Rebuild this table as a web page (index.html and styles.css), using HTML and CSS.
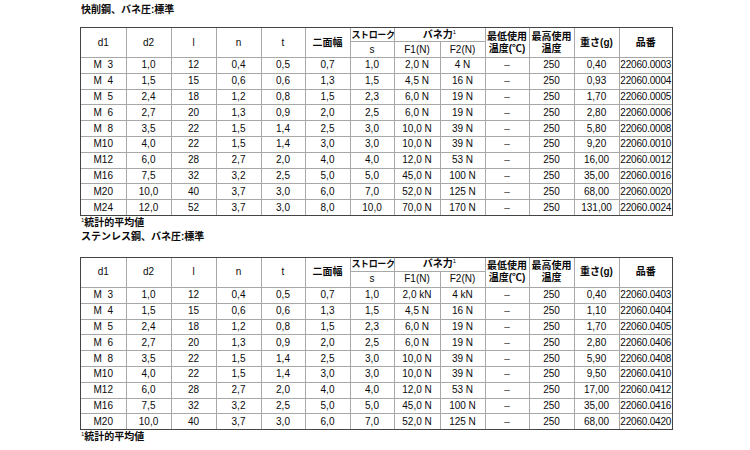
FILE: index.html
```html
<!DOCTYPE html>
<html lang="ja">
<head>
<meta charset="utf-8">
<link rel="stylesheet" href="styles.css">
</head>
<body>
<div class="page">
  <div class="title first">快削鋼、バネ圧:標準</div>
  <div class="frame">
    <table class="spec">
      <colgroup>
        <col class="c45"><col class="c45"><col class="c45"><col class="c45"><col class="c44"><col class="c45"><col class="c44"><col class="c46"><col class="c45"><col class="c44"><col class="c45"><col class="c45"><col class="c53">
      </colgroup>
      <thead>
        <tr class="h1">
          <th rowspan="2">d1</th><th rowspan="2">d2</th><th rowspan="2">l</th><th rowspan="2">n</th><th rowspan="2">t</th>
          <th rowspan="2" class="jp">二面幅</th>
          <th class="jp stroke">ストローク</th>
          <th colspan="2" class="jp">バネ力<sup>1</sup></th>
          <th rowspan="2" class="jp two">最低使用<br>温度(℃)</th>
          <th rowspan="2" class="jp two">最高使用<br>温度</th>
          <th rowspan="2" class="jp">重さ(g)</th>
          <th rowspan="2" class="jp">品番</th>
        </tr>
        <tr class="h2">
          <th>s</th><th>F1(N)</th><th>F2(N)</th>
        </tr>
      </thead>
      <tbody>
        <tr><td>M&#8199;3</td><td>1,0</td><td>12</td><td>0,4</td><td>0,5</td><td>0,7</td><td>1,0</td><td>2,0 N</td><td>4 N</td><td class="dash">–</td><td>250</td><td>0,40</td><td class="pn">22060.0003</td></tr>
        <tr><td>M&#8199;4</td><td>1,5</td><td>15</td><td>0,6</td><td>0,6</td><td>1,3</td><td>1,5</td><td>4,5 N</td><td>16 N</td><td class="dash">–</td><td>250</td><td>0,93</td><td class="pn">22060.0004</td></tr>
        <tr><td>M&#8199;5</td><td>2,4</td><td>18</td><td>1,2</td><td>0,8</td><td>1,5</td><td>2,3</td><td>6,0 N</td><td>19 N</td><td class="dash">–</td><td>250</td><td>1,70</td><td class="pn">22060.0005</td></tr>
        <tr><td>M&#8199;6</td><td>2,7</td><td>20</td><td>1,3</td><td>0,9</td><td>2,0</td><td>2,5</td><td>6,0 N</td><td>19 N</td><td class="dash">–</td><td>250</td><td>2,80</td><td class="pn">22060.0006</td></tr>
        <tr><td>M&#8199;8</td><td>3,5</td><td>22</td><td>1,5</td><td>1,4</td><td>2,5</td><td>3,0</td><td>10,0 N</td><td>39 N</td><td class="dash">–</td><td>250</td><td>5,80</td><td class="pn">22060.0008</td></tr>
        <tr><td>M10</td><td>4,0</td><td>22</td><td>1,5</td><td>1,4</td><td>3,0</td><td>3,0</td><td>10,0 N</td><td>39 N</td><td class="dash">–</td><td>250</td><td>9,20</td><td class="pn">22060.0010</td></tr>
        <tr><td>M12</td><td>6,0</td><td>28</td><td>2,7</td><td>2,0</td><td>4,0</td><td>4,0</td><td>12,0 N</td><td>53 N</td><td class="dash">–</td><td>250</td><td>16,00</td><td class="pn">22060.0012</td></tr>
        <tr><td>M16</td><td>7,5</td><td>32</td><td>3,2</td><td>2,5</td><td>5,0</td><td>5,0</td><td>45,0 N</td><td>100 N</td><td class="dash">–</td><td>250</td><td>35,00</td><td class="pn">22060.0016</td></tr>
        <tr><td>M20</td><td>10,0</td><td>40</td><td>3,7</td><td>3,0</td><td>6,0</td><td>7,0</td><td>52,0 N</td><td>125 N</td><td class="dash">–</td><td>250</td><td>68,00</td><td class="pn">22060.0020</td></tr>
        <tr><td>M24</td><td>12,0</td><td>52</td><td>3,7</td><td>3,0</td><td>8,0</td><td>10,0</td><td>70,0 N</td><td>170 N</td><td class="dash">–</td><td>250</td><td>131,00</td><td class="pn">22060.0024</td></tr>
      </tbody>
    </table>
  </div>
  <div class="note"><sup>1</sup>統計的平均値</div>
  <div class="title second">ステンレス鋼、バネ圧:標準</div>
  <div class="frame">
    <table class="spec">
      <colgroup>
        <col class="c45"><col class="c45"><col class="c45"><col class="c45"><col class="c44"><col class="c45"><col class="c44"><col class="c46"><col class="c45"><col class="c44"><col class="c45"><col class="c45"><col class="c53">
      </colgroup>
      <thead>
        <tr class="h1">
          <th rowspan="2">d1</th><th rowspan="2">d2</th><th rowspan="2">l</th><th rowspan="2">n</th><th rowspan="2">t</th>
          <th rowspan="2" class="jp">二面幅</th>
          <th class="jp stroke">ストローク</th>
          <th colspan="2" class="jp">バネ力<sup>1</sup></th>
          <th rowspan="2" class="jp two">最低使用<br>温度(℃)</th>
          <th rowspan="2" class="jp two">最高使用<br>温度</th>
          <th rowspan="2" class="jp">重さ(g)</th>
          <th rowspan="2" class="jp">品番</th>
        </tr>
        <tr class="h2">
          <th>s</th><th>F1(N)</th><th>F2(N)</th>
        </tr>
      </thead>
      <tbody>
        <tr><td>M&#8199;3</td><td>1,0</td><td>12</td><td>0,4</td><td>0,5</td><td>0,7</td><td>1,0</td><td>2,0 kN</td><td>4 kN</td><td class="dash">–</td><td>250</td><td>0,40</td><td class="pn">22060.0403</td></tr>
        <tr><td>M&#8199;4</td><td>1,5</td><td>15</td><td>0,6</td><td>0,6</td><td>1,3</td><td>1,5</td><td>4,5 N</td><td>16 N</td><td class="dash">–</td><td>250</td><td>1,10</td><td class="pn">22060.0404</td></tr>
        <tr><td>M&#8199;5</td><td>2,4</td><td>18</td><td>1,2</td><td>0,8</td><td>1,5</td><td>2,3</td><td>6,0 N</td><td>19 N</td><td class="dash">–</td><td>250</td><td>1,70</td><td class="pn">22060.0405</td></tr>
        <tr><td>M&#8199;6</td><td>2,7</td><td>20</td><td>1,3</td><td>0,9</td><td>2,0</td><td>2,5</td><td>6,0 N</td><td>19 N</td><td class="dash">–</td><td>250</td><td>2,80</td><td class="pn">22060.0406</td></tr>
        <tr><td>M&#8199;8</td><td>3,5</td><td>22</td><td>1,5</td><td>1,4</td><td>2,5</td><td>3,0</td><td>10,0 N</td><td>39 N</td><td class="dash">–</td><td>250</td><td>5,90</td><td class="pn">22060.0408</td></tr>
        <tr><td>M10</td><td>4,0</td><td>22</td><td>1,5</td><td>1,4</td><td>3,0</td><td>3,0</td><td>10,0 N</td><td>39 N</td><td class="dash">–</td><td>250</td><td>9,50</td><td class="pn">22060.0410</td></tr>
        <tr><td>M12</td><td>6,0</td><td>28</td><td>2,7</td><td>2,0</td><td>4,0</td><td>4,0</td><td>12,0 N</td><td>53 N</td><td class="dash">–</td><td>250</td><td>17,00</td><td class="pn">22060.0412</td></tr>
        <tr><td>M16</td><td>7,5</td><td>32</td><td>3,2</td><td>2,5</td><td>5,0</td><td>5,0</td><td>45,0 N</td><td>100 N</td><td class="dash">–</td><td>250</td><td>35,00</td><td class="pn">22060.0416</td></tr>
        <tr><td>M20</td><td>10,0</td><td>40</td><td>3,7</td><td>3,0</td><td>6,0</td><td>7,0</td><td>52,0 N</td><td>125 N</td><td class="dash">–</td><td>250</td><td>68,00</td><td class="pn">22060.0420</td></tr>
      </tbody>
    </table>
  </div>
  <div class="note"><sup>1</sup>統計的平均値</div>
</div>
</body>
</html>
```

FILE: styles.css
```css
html, body {
  margin: 0;
  padding: 0;
  background: #ffffff;
}

body {
  font-family: "Liberation Sans", "Noto Sans CJK JP", sans-serif;
  color: #0a0a0a;
  font-size: 10px;
}

.page {
  padding-left: 80px;
  padding-top: 3px;
}

.title {
  font-weight: bold;
  font-size: 10px;
  line-height: 14px;
  padding-left: 1px;
}

.title.first {
  margin-bottom: 10px;
}

.title.second {
  margin-bottom: 13px;
}

.frame {
  display: inline-block;
  border: 1px solid #444444;
  vertical-align: top;
}

.spec {
  border-collapse: collapse;
  border-style: hidden;
  table-layout: fixed;
  width: 591px;
}

.c44 { width: 44px; }
.c45 { width: 45px; }
.c46 { width: 46px; }
.c53 { width: 53px; }

.spec th,
.spec td {
  border: 1px solid #a8a8a8;
  padding: 0;
  text-align: center;
  vertical-align: middle;
  font-size: 10px;
  white-space: nowrap;
}

.spec th {
  font-weight: normal;
}

.spec th.jp {
  font-weight: bold;
}

.spec tr.h1 th {
  height: 13px;
  line-height: 12px;
}

.spec tr.h2 th {
  height: 15px;
  line-height: 12px;
}

.spec th.two {
  line-height: 13px;
}

.spec th.stroke {
  text-align: left;
  padding-left: 1px;
  font-size: 9px;
  letter-spacing: -0.4px;
}

.spec td {
  height: 14.8px;
  line-height: 12px;
}

.spec td.pn {
  letter-spacing: -0.2px;
}

.spec td.dash {
  color: #444444;
}

.spec sup {
  font-size: 6px;
  line-height: 0;
  vertical-align: 4px;
  font-weight: normal;
}

.note {
  font-weight: bold;
  font-size: 10px;
  line-height: 14px;
  padding-left: 1px;
}

.note sup {
  font-size: 6px;
  line-height: 0;
  vertical-align: 4px;
  font-weight: normal;
}
```
